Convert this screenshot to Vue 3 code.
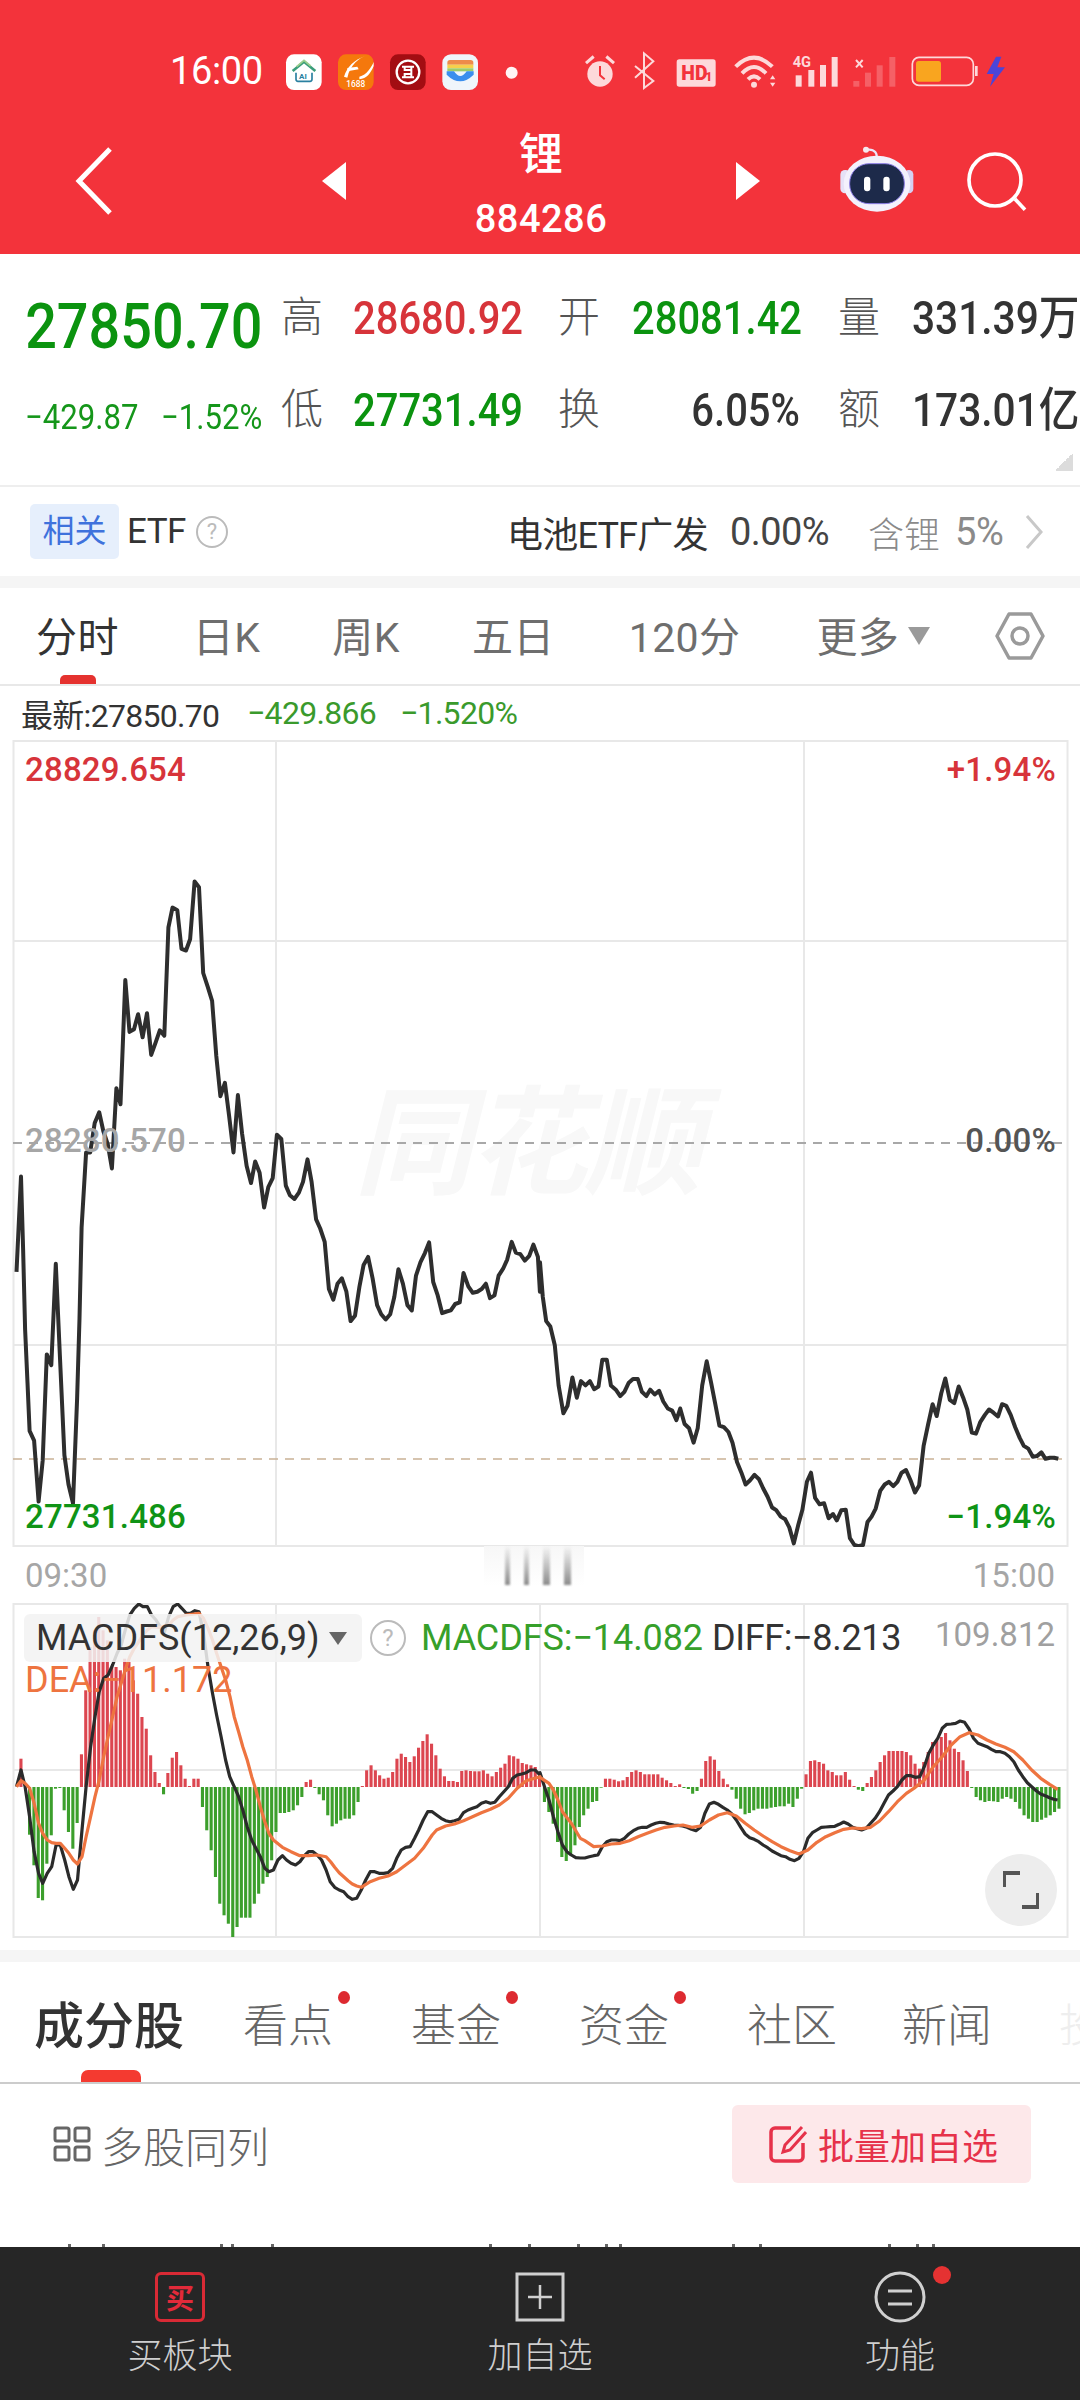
<script setup>
const flat = (a, fx, fy) => {
  const out = []
  for (let i = 0; i < a.length; i += 2) out.push(fx(a[i]).toFixed(1) + ',' + fy(a[i + 1]).toFixed(1))
  return out.join(' ')
}
const Lx = (x) => x / 2.904
const Rx = (x) => 540 + x / 2.904
const mainY = (y) => 740 + y / 1.867
const macdY = (y) => 1590 + y / 3

const mainL = [48,993,61,815,67,950,73,1100,80,1200,86,1290,99,1308,112,1422,124,1345,136,1147,149,1167,162,978,174,1150,187,1335,199,1390,212,1425,224,1230,231,1080,237,910,250,770,262,770,275,715,288,695,300,730,313,755,325,800,338,650,350,680,364,448,376,545,389,540,401,512,414,555,427,510,439,588,452,565,464,542,477,552,489,350,501,313,515,318,527,390,540,393,552,372,565,264,578,275,590,435,603,460,616,487,628,590,640,665,653,640,665,700,678,770,691,663,703,735,716,795,729,827,741,787,754,808,767,873,779,835,792,818,804,737,817,745,830,832,842,850,855,857,868,845,880,825,893,783,905,825,918,895,930,912,943,937,955,1025,968,1045,980,1015,993,1005,1006,1030,1018,1085,1031,1075,1044,1020,1056,980,1069,965,1082,1005,1095,1055,1107,1072,1120,1082,1133,1072,1145,1040,1157,988,1170,1015,1183,1055,1196,1065,1208,1000,1221,975,1234,958,1246,938,1258,1012,1271,1037,1284,1070,1297,1067,1309,1065,1322,1053,1335,1050,1346,995,1360,1020,1373,1032,1386,1030,1399,1025,1411,1015,1423,1042,1436,1037,1448,1000,1461,987,1473,970,1486,937,1498,957,1511,960,1524,972,1537,963,1549,942,1562,965,1568,1030]
const mainR = [0,975,8,1040,18,1085,30,1095,43,1130,54,1205,68,1257,80,1243,94,1190,107,1228,119,1197,132,1205,145,1197,157,1212,170,1207,181,1157,194,1157,206,1205,220,1213,233,1225,245,1217,258,1200,270,1193,284,1193,296,1217,309,1225,320,1213,333,1222,346,1215,358,1235,371,1248,384,1252,396,1270,407,1248,420,1277,433,1285,446,1312,458,1285,471,1205,484,1160,497,1200,509,1240,521,1280,534,1283,547,1292,559,1312,572,1348,585,1368,597,1390,610,1382,623,1372,636,1380,648,1397,661,1413,674,1433,686,1438,699,1450,712,1455,724,1470,737,1500,750,1465,762,1437,775,1385,787,1368,799,1415,812,1427,825,1425,838,1453,851,1445,862,1457,875,1438,888,1437,900,1490,913,1503,925,1505,938,1503,951,1460,963,1450,975,1435,988,1402,1001,1390,1013,1385,1026,1393,1038,1385,1050,1368,1063,1363,1076,1382,1089,1405,1101,1392,1114,1318,1127,1278,1140,1240,1152,1262,1165,1220,1177,1192,1190,1232,1203,1238,1216,1207,1229,1228,1241,1250,1254,1293,1266,1295,1279,1273,1292,1260,1304,1250,1317,1256,1330,1263,1342,1240,1354,1243,1367,1260,1380,1283,1393,1303,1405,1318,1418,1323,1431,1338,1443,1337,1456,1330,1468,1342,1481,1340,1493,1340,1505,1342]
const mainLine = flat(mainL, Lx, mainY) + ' ' + flat(mainR, Rx, mainY)

const blackL = [48,590,61,540,73,590,86,680,99,785,112,850,124,880,137,850,150,830,163,765,175,765,188,810,200,860,213,898,225,870,238,720,250,590,263,470,276,380,288,305,301,265,314,255,327,225,340,190,352,165,365,115,377,75,390,55,403,42,415,50,428,50,440,75,453,90,465,110,478,125,490,80,503,50,516,42,528,55,541,70,553,70,566,62,578,65,591,130,604,230,617,310,629,375,642,440,655,510,667,560,680,590,693,620,705,660,718,710,731,750,743,775,756,800,769,835,781,845,794,840,807,810,820,797,832,810,845,820,858,825,871,815,883,798,896,785,909,785,921,795,934,810,947,840,959,875,972,892,985,900,998,905,1011,920,1023,928,1036,925,1049,900,1062,870,1075,845,1088,845,1101,850,1114,850,1127,848,1140,835,1152,805,1165,780,1178,772,1191,770,1204,745,1216,720,1229,690,1242,665,1255,665,1268,675,1281,685,1294,692,1307,695,1320,692,1333,688,1346,668,1359,660,1372,655,1385,650,1398,640,1411,635,1424,640,1437,637,1450,620,1463,605,1476,590,1489,565,1502,555,1515,552,1528,548,1541,540,1554,540,1568,555]
const blackR = [0,548,13,590,26,630,39,680,52,725,65,765,78,785,91,795,104,803,117,804,130,804,143,800,156,797,168,795,181,770,194,755,207,750,220,750,233,752,245,745,258,732,271,722,284,715,297,712,310,712,323,705,336,700,349,697,362,698,375,702,388,705,401,706,414,708,427,712,440,718,453,722,466,712,479,670,492,642,505,637,518,643,531,652,544,660,557,672,570,690,583,712,596,732,609,743,622,748,635,755,648,765,661,773,674,783,687,790,700,797,713,800,726,808,739,812,752,805,765,785,778,745,791,728,804,720,817,712,830,711,843,710,856,709,869,703,882,696,895,702,908,712,921,716,934,720,947,715,960,700,973,685,986,665,999,640,1012,615,1025,603,1038,590,1051,570,1064,557,1077,557,1090,562,1103,560,1116,530,1129,490,1142,465,1155,445,1168,415,1181,403,1194,402,1207,400,1220,393,1233,397,1246,417,1259,445,1272,460,1285,465,1298,470,1311,478,1324,485,1337,485,1350,490,1363,500,1376,515,1389,540,1402,560,1415,578,1428,590,1441,602,1454,612,1467,617,1480,623,1492,628,1503,630]
const orangeL = [48,590,61,572,73,580,86,595,99,640,112,700,124,730,137,750,150,758,163,760,175,760,188,775,200,790,213,810,225,822,238,800,250,740,263,680,276,620,288,570,301,500,314,440,327,380,340,320,352,280,365,235,377,200,390,175,403,155,415,135,428,120,440,110,465,112,490,105,503,90,516,80,541,75,578,70,591,85,604,115,617,150,629,190,642,230,655,270,668,320,680,380,693,425,705,470,718,510,731,560,743,600,756,650,769,695,781,730,794,750,820,772,845,785,871,797,896,797,921,795,947,800,960,815,972,832,985,848,998,860,1011,872,1023,882,1036,888,1049,892,1075,875,1101,865,1127,858,1152,845,1178,825,1204,805,1229,775,1255,735,1268,720,1294,708,1320,702,1346,692,1372,680,1398,668,1424,658,1450,645,1476,625,1502,595,1528,572,1568,560]
const orangeR = [0,562,26,580,39,600,52,630,65,665,91,700,117,745,130,752,156,770,181,768,207,762,233,760,259,752,285,740,311,730,337,720,363,712,389,708,415,705,441,712,466,708,492,690,518,675,544,668,570,678,596,700,622,720,648,738,674,755,700,770,726,782,752,792,778,780,804,757,830,740,856,728,882,718,908,714,934,716,960,712,986,693,1012,665,1038,635,1064,610,1090,592,1116,570,1142,530,1168,500,1194,465,1220,440,1246,428,1272,435,1298,450,1324,462,1350,472,1376,485,1402,510,1428,540,1454,565,1480,583,1503,598]
const blackLine = flat(blackL, Lx, macdY) + ' ' + flat(blackR, Rx, macdY)
const orangeLine = flat(orangeL, Lx, macdY) + ' ' + flat(orangeR, Rx, macdY)

const barsL = [85,0,-143,-235,-333,-340,-230,-145,-5,-3,-70,-135,-185,-108,98,290,420,470,510,470,440,360,360,350,385,375,320,280,210,175,95,45,12,-22,42,88,105,65,25,3,25,25,-60,-130,-190,-270,-350,-385,-410,-450,-420,-392,-392,-392,-350,-320,-290,-270,-220,-135,-78,-78,-75,-70,-55,-30,15,22,-3,-22,-40,-85,-118,-110,-100,-95,-95,-85,-45,3,50,65,50,35,25,28,45,85,100,90,75,92,118,138,158,130,95,55,32,18,18,15,48,50,48,47,47,50,40,32,45,58,70,95,92,85,72,68,65,60,40]
const barsR = [-45,-75,-110,-165,-210,-222,-205,-175,-120,-85,-65,-45,-42,-2,25,25,22,17,20,30,45,50,45,38,38,38,38,28,20,12,3,8,-3,-6,-20,-12,25,78,92,82,48,25,8,-8,-35,-65,-82,-78,-70,-65,-65,-65,-62,-60,-58,-58,-50,-60,-35,-5,38,78,80,75,70,50,45,35,35,45,22,3,-8,-12,12,30,50,75,95,108,108,108,108,105,95,70,55,75,105,135,140,150,162,140,115,105,80,48,-3,-30,-40,-45,-42,-43,-45,-35,-30,-35,-45,-65,-85,-95,-105,-105,-98,-92,-85,-75,-65]
const makeBars = (arr, x0, x1) => arr.map((h, i) => {
  const x = x0 + (i * (x1 - x0)) / (arr.length - 1)
  const hh = Math.abs(h) / 3
  return { x: (x - 1.6).toFixed(1), y: (h > 0 ? 1787 - hh : 1787).toFixed(1), h: hh.toFixed(1), up: h > 0 }
})
const bars = [...makeBars(barsL, 21, 539.6), ...makeBars(barsR, 544.5, 1059)]
const ticks = [68, 102, 220, 231, 271, 489, 528, 577, 605, 619, 732, 759, 888, 916, 932]

const tabs = ['分时', '日K', '周K', '五日', '120分']
const subTabs = [
  { t: '看点', dot: true }, { t: '基金', dot: true }, { t: '资金', dot: true },
  { t: '社区', dot: false }, { t: '新闻', dot: false }
]
</script>

<template>
  <div class="page">
    <header class="head">
      <div class="status">
        <span class="time">16:00</span>
        <svg class="apps" width="270" height="50" viewBox="0 0 810 150">
          <rect x="48" y="25" width="107" height="107" rx="24" fill="#fff" />
          <path d="M68 75 L102 47 L136 75" fill="none" stroke="#3a9d7a" stroke-width="8" />
          <path d="M80 62 L102 43 L122 60" fill="none" stroke="#9ccf8e" stroke-width="5" />
          <path d="M78 80 V100 a6 6 0 0 0 6 6 H120 a6 6 0 0 0 6 -6 V80" fill="none" stroke="#2a80a0" stroke-width="5" />
          <text x="87" y="100" font-size="24" font-weight="700" fill="#2a80a0" class="svgt">AI</text>
          <rect x="204" y="25" width="107" height="107" rx="24" fill="#f5780c" />
          <path d="M222 92 C232 62 252 42 285 30 C270 36 240 55 232 95 Z" fill="#fff" />
          <path d="M232 66 L262 62 L266 70 L232 76 Z M268 92 C290 88 305 62 311 48 L311 60 C302 82 290 98 268 100 Z" fill="#fff" />
          <text x="229" y="122" font-size="25" font-weight="500" fill="#fff" class="svgt">1688</text>
          <rect x="360" y="25" width="107" height="107" rx="24" fill="#a30d12" />
          <circle cx="414" cy="78" r="34" fill="none" stroke="#fff" stroke-width="7" />
          <path d="M396 62 H432 M396 94 H432 M404 62 V72 H424 V84 H404 V94 M424 62 V72 M424 84 V94" fill="none" stroke="#fff" stroke-width="6" />
          <rect x="517" y="25" width="107" height="107" rx="26" fill="#eff5fb" />
          <path d="M532 56 V50 a8 8 0 0 1 8 -8 H602 a8 8 0 0 1 8 8 V56 Z" fill="#ee8a4a" />
          <rect x="532" y="56" width="78" height="11" fill="#f6cf4c" />
          <rect x="532" y="67" width="78" height="9" fill="#9ccc6a" />
          <path d="M530 76 H552 Q571 104 590 76 H611 V86 Q590 106 571 106 Q550 106 530 86 Z" fill="#3a8eee" />
          <circle cx="725" cy="80" r="18" fill="#fff5f5" />
        </svg>
        <svg class="sys" width="450" height="50" viewBox="0 0 1350 150">
          <g fill="#fdd9da" stroke="none">
            <circle cx="90" cy="84" r="38" />
            <path d="M45 48 L68 28 L74 35 L51 55 Z M112 28 L135 48 L129 55 L106 35 Z" />
            <rect x="320" y="40" width="117" height="82" rx="8" />
            <circle cx="552" cy="116" r="9" />
            <path d="M600 100 L608 88 L616 100 Z M600 110 L616 110 L608 122 Z" />
            <rect x="677" y="88" width="18" height="34" /><rect x="715" y="72" width="18" height="50" />
            <rect x="750" y="57" width="18" height="65" /><rect x="785" y="33" width="18" height="89" />
            <rect x="1215" y="60" width="8" height="30" />
          </g>
          <path d="M90 60 V88 L104 100" fill="none" stroke="#f3333b" stroke-width="6" />
          <path d="M195 60 L250 105 L222 126 V22 L250 46 L195 95" fill="none" stroke="#fdd9da" stroke-width="6" />
          <text x="334" y="102" font-size="58" font-weight="900" fill="#f3333b" class="svgt">HD</text>
          <text x="406" y="106" font-size="36" font-weight="900" fill="#f3333b" class="svgt">1</text>
          <g fill="none" stroke="#fdd9da" stroke-width="12">
            <path d="M497 62 Q552 8 607 62" /><path d="M516 82 Q552 44 588 82" /><path d="M534 100 Q552 82 570 100" />
          </g>
          <text x="668" y="64" font-size="44" font-weight="700" fill="#fdd9da" class="svgt">4G</text>
          <path d="M858 42 L878 64 M878 42 L858 64" stroke="#fdd9da" stroke-width="6" />
          <g fill="#fff" opacity=".22">
            <rect x="850" y="105" width="18" height="17" /><rect x="885" y="80" width="18" height="42" />
            <rect x="920" y="58" width="18" height="64" /><rect x="958" y="33" width="18" height="89" />
          </g>
          <rect x="1027" y="34" width="183" height="84" rx="20" fill="none" stroke="#fdd9da" stroke-width="5" />
          <rect x="1038" y="45" width="75" height="62" rx="8" fill="#f9a51f" />
          <path d="M1278 32 L1250 84 H1271 L1260 122 L1305 64 H1282 L1294 32 Z" fill="#4a45d8" />
        </svg>
      </div>
      <div class="nav">
        <svg class="up" width="38" height="68" viewBox="0 0 38 68"><path d="M35 2 L4 34 L35 66" fill="none" stroke="#fff" stroke-width="5" /></svg>
        <svg class="tri-l up" width="24" height="38" viewBox="0 0 24 38"><path d="M24 0 V38 L0 19 Z" fill="#fff" /></svg>
        <div class="title">
          <span class="name">锂</span>
          <span class="code">884286</span>
        </div>
        <svg class="up" width="24" height="38" viewBox="0 0 24 38"><path d="M0 0 V38 L24 19 Z" fill="#fff" /></svg>
        <svg class="tools" width="220" height="90" viewBox="0 0 660 270">
          <path d="M165 75 C172 55 160 42 140 44" fill="none" stroke="#ece6fb" stroke-width="7" />
          <circle cx="135" cy="44" r="9" fill="#f6e9ee" />
          <rect x="58" y="105" width="30" height="70" rx="14" fill="#e6e2f7" />
          <rect x="250" y="105" width="27" height="70" rx="13" fill="#d5d0f2" />
          <ellipse cx="168" cy="146" rx="100" ry="84" fill="#f3f1fc" />
          <rect x="86" y="86" width="164" height="120" rx="58" fill="#1d2a4a" stroke="#8c7ee6" stroke-width="3" />
          <rect x="129" y="125" width="19" height="44" rx="9" fill="#fff" />
          <rect x="187" y="125" width="19" height="44" rx="9" fill="#fff" />
          <circle cx="522" cy="135" r="78" fill="none" stroke="#fff" stroke-width="11" />
          <path d="M582 192 L612 224" stroke="#fff" stroke-width="11" />
        </svg>
      </div>
    </header>

    <section class="quote">
      <div class="price">27850.70</div>
      <span class="lb">高</span><span class="val red">28680.92</span>
      <span class="lb">开</span><span class="val green">28081.42</span>
      <span class="lb">量</span><span class="val dark end">331.39万</span>
      <div class="chg"><span>−429.87</span><span>−1.52%</span></div>
      <span class="lb">低</span><span class="val green">27731.49</span>
      <span class="lb">换</span><span class="val dark rate">6.05%</span>
      <span class="lb">额</span><span class="val dark end">173.01亿</span>
      <i class="corner"></i>
    </section>

    <section class="etf">
      <span class="chip">相关</span>
      <span class="etf-t">ETF</span>
      <span class="q">?</span>
      <span class="etf-name">电池ETF广发</span>
      <span class="etf-num">0.00%</span>
      <span class="etf-has">含锂</span>
      <span class="etf-pct">5%</span>
      <svg class="chev" width="18" height="34" viewBox="0 0 18 34"><path d="M2 1 L16 17 L2 33" fill="none" stroke="#c8c8c8" stroke-width="3" /></svg>
    </section>
    <div class="band"></div>

    <nav class="tabs">
      <span v-for="(t, i) in tabs" :key="t" class="tab" :class="{ on: i === 0 }">{{ t }}</span>
      <span class="tab more">更多</span>
      <i class="more-tri"></i>
      <svg class="hex" width="50" height="48" viewBox="0 0 50 48">
        <path d="M14 2 H36 L48 24 L36 46 H14 L2 24 Z" fill="none" stroke="#9a9a9a" stroke-width="3.5" stroke-linejoin="round" />
        <circle cx="25" cy="24" r="8" fill="none" stroke="#9a9a9a" stroke-width="3.5" />
      </svg>
    </nav>

    <div class="info">
      <span class="info-a">最新:27850.70</span>
      <span class="info-b">−429.866</span>
      <span class="info-b">−1.520%</span>
    </div>

    <section class="chart">
      <div class="watermark">同花顺</div>
      <svg class="plot" width="1080" height="807" viewBox="0 740 1080 807">
        <g stroke="#e8e8e8" stroke-width="2" fill="none">
          <rect x="13.5" y="741" width="1054" height="805" />
          <path d="M13 941 H1067 M13 1345 H1067 M276 740 V1546 M804 740 V1546" />
        </g>
        <path d="M13 1143 H1062" stroke="#a8a8a8" stroke-width="2" stroke-dasharray="9 7" />
        <path d="M13 1459 H1062" stroke="#c9b195" stroke-width="1.5" stroke-dasharray="9 7" />
        <polyline :points="mainLine" fill="none" stroke="#2e2e2e" stroke-width="4" stroke-linejoin="round" />
      </svg>
      <span class="pl tl red">28829.654</span>
      <span class="pl ml gray">28280.570</span>
      <span class="pl bl cgreen">27731.486</span>
      <span class="pl tr red">+1.94%</span>
      <span class="pl mr dim">0.00%</span>
      <span class="pl br cgreen">−1.94%</span>
      <div class="grip"><i></i><i></i><i class="w"></i><i class="w"></i></div>
    </section>

    <div class="axis"><span>09:30</span><span>15:00</span></div>

    <section class="macd">
      <svg class="plot" width="1080" height="335" viewBox="0 1603 1080 335">
        <g stroke="#e8e8e8" stroke-width="2" fill="none">
          <rect x="13.5" y="1604" width="1054" height="333" />
          <path d="M13 1770 H1067 M276 1603 V1937 M540 1603 V1937 M804 1603 V1937" />
        </g>
        <rect v-for="(b, i) in bars" :key="i" :x="b.x" :y="b.y" width="3.1" :height="b.h" :fill="b.up ? '#dc4650' : '#3c9f2c'" />
        <polyline :points="blackLine" fill="none" stroke="#2b2b2b" stroke-width="3.2" stroke-linejoin="round" />
        <polyline :points="orangeLine" fill="none" stroke="#ee7440" stroke-width="3.2" stroke-linejoin="round" />
      </svg>
      <div class="legend">
        <span class="sel">MACDFS(12,26,9)<i class="sel-tri"></i></span>
        <span class="q big">?</span>
        <span class="m-g">MACDFS:−14.082</span>
        <span class="m-d">DIFF:−8.213</span>
      </div>
      <span class="max">109.812</span>
      <span class="dea">DEA:−11.172</span>
      <button class="expand" type="button">
        <svg width="36" height="38" viewBox="0 0 36 38"><path d="M1 16 V2 H17 M35 22 V36 H19" fill="none" stroke="#555" stroke-width="4" /></svg>
      </button>
    </section>

    <div class="gap"></div>
    <div class="band"></div>

    <nav class="subtabs">
      <span class="lead">成分股</span>
      <span v-for="s in subTabs" :key="s.t" class="st">{{ s.t }}<i v-if="s.dot" class="st-dot"></i></span>
      <span class="st fade">投资</span>
    </nav>

    <main class="content">
      <div class="tools-row">
        <svg width="38" height="36" viewBox="0 0 38 36">
          <g fill="none" stroke="#666" stroke-width="3">
            <rect x="2" y="2" width="14" height="13" rx="2" /><rect x="22" y="2" width="14" height="13" rx="2" />
            <rect x="2" y="21" width="14" height="13" rx="2" /><rect x="22" y="21" width="14" height="13" rx="2" />
          </g>
        </svg>
        <span class="multi">多股同列</span>
        <button class="batch" type="button">
          <svg width="38" height="38" viewBox="0 0 38 38">
            <path d="M22 3 H6 a4 4 0 0 0 -4 4 V32 a4 4 0 0 0 4 4 H30 a4 4 0 0 0 4 -4 V18" fill="none" stroke="#e6324a" stroke-width="3.5" />
            <path d="M33 2 L16 20 L14 27 L21 25 L37 7" fill="none" stroke="#e6324a" stroke-width="3" />
          </svg>
          <span>批量加自选</span>
        </button>
      </div>
      <svg class="peek" width="1080" height="3" viewBox="0 0 1080 3">
        <rect v-for="x in ticks" :key="x" :x="x" y="0" width="3" height="3" fill="#666" />
      </svg>
    </main>

    <footer class="foot">
      <div class="foot-i">
        <span class="buy"><b>买</b></span>
        <span class="foot-t">买板块</span>
      </div>
      <div class="foot-i">
        <svg width="50" height="50" viewBox="0 0 50 50">
          <rect x="2" y="2" width="46" height="46" fill="none" stroke="#d0d0d0" stroke-width="3" />
          <path d="M25 13 V37 M13 25 H37" stroke="#d0d0d0" stroke-width="2.5" />
        </svg>
        <span class="foot-t">加自选</span>
      </div>
      <div class="foot-i">
        <span class="fn">
          <svg width="52" height="52" viewBox="0 0 52 52">
            <circle cx="26" cy="26" r="24" fill="none" stroke="#d0d0d0" stroke-width="3" />
            <path d="M14 20 H38 M14 33 H38" stroke="#d0d0d0" stroke-width="3" />
          </svg>
          <i class="fn-dot"></i>
        </span>
        <span class="foot-t">功能</span>
      </div>
    </footer>
  </div>
</template>

<style scoped>
.page {
  width: 1080px; height: 2400px; overflow: hidden; background: #fff;
  display: flex; flex-direction: column;
  font-family: Roboto, "Noto Sans CJK SC", sans-serif; color: #333;
}
.svgt { font-family: Roboto, "Noto Sans CJK SC", sans-serif; }
.head { height: 254px; background: #f3333b; color: #fff; flex: none; }
.status { display: flex; align-items: center; height: 50px; padding: 46px 0 0 170px; }
.time { width: 100px; font-size: 38px; letter-spacing: -.4px; color: #fff; }
.sys { margin-left: 30px; }
.nav { display: flex; align-items: center; height: 112px; margin-top: 34px; padding-left: 75px; }
.up { margin-bottom: 10px; }
.tri-l { margin-left: 209px; }
.title { width: 390px; height: 112px; display: flex; flex-direction: column; align-items: center; }
.name { font-size: 44px; line-height: 50px; font-weight: 500; }
.code { font-size: 38px; line-height: 38px; margin-top: 20px; font-weight: 500; letter-spacing: .5px; }
.tools { margin-left: 61px; margin-bottom: 12px; }

.quote {
  position: relative; flex: none; border-bottom: 2px solid #eee; height: 213px; padding-top: 18px;
  display: grid; grid-template-columns: 281px 72px 205px 74px 206px 74px 168px;
  grid-template-rows: 92px 92px; align-content: start; align-items: center;
}
.price {
  font-size: 63px; font-weight: 500; color: #0b930f; padding-left: 25px; line-height: 60px; margin-top: 18px;
  transform: scaleX(.885); transform-origin: 0 50%; white-space: nowrap; margin-left: 3px;
}
.chg { display: flex; padding-left: 25px; font-size: 35px; color: #15961a; margin-top: 14px; white-space: nowrap; }
.chg span { width: 136px; flex: none; transform: scaleX(.89); transform-origin: 0 50%; }
.lb { font-size: 42px; font-weight: 300; color: #555; line-height: 50px; }
.val {
  font-size: 47px; font-weight: 500; line-height: 56px; white-space: nowrap;
  transform: scaleX(.85); transform-origin: 0 50%;
}
.red { color: #d7343a; }
.green { color: #0b930f; }
.dark { color: #333; }
.val.end { transform: scaleX(.865); }
.val.rate { text-align: right; margin-right: 38px; transform-origin: 100% 50%; }
.corner {
  position: absolute; right: 7px; top: 199px; width: 18px; height: 18px;
  background: linear-gradient(135deg, transparent 50%, #dcdcdc 50%);
}

.etf { flex: none; height: 89px; display: flex; align-items: center; padding-left: 30px; font-size: 34px; }
.chip { width: 89px; height: 55px; background: #e6effc; color: #3f72dc; border-radius: 5px; text-align: center; line-height: 55px; font-size: 32px; }
.etf-t { margin-left: 8px; width: 61px; font-size: 35px; letter-spacing: -.5px; }
.q {
  width: 28px; height: 28px; margin-left: 8px; border: 2px solid #bbb; border-radius: 50%;
  font-size: 22px; line-height: 28px; color: #bbb; text-align: center; flex: none;
}
.etf-name { margin-left: 279px; width: 223px; font-size: 36px; letter-spacing: -.8px; white-space: nowrap; color: #333; }
.etf-num { font-size: 38px; letter-spacing: -.6px; width: 138px; color: #444; }
.etf-has { font-size: 36px; color: #8a8a8a; width: 87px; font-weight: 300; }
.etf-pct { font-size: 38px; color: #8a8a8a; width: 70px; letter-spacing: -.3px; }
.band { flex: none; height: 12px; background: #f5f5f5; }

.tabs { flex: none; position: relative; height: 96px; border-bottom: 2px solid #e8e8e8; display: flex; align-items: center; padding-left: 36px; }
.tab { font-size: 41px; color: #6e6e6e; line-height: 50px; white-space: nowrap; letter-spacing: .4px; padding-top: 3px; }
.tab:nth-child(2) { margin-left: 74px; }
.tab:nth-child(3) { margin-left: 72px; }
.tab:nth-child(4) { margin-left: 72px; }
.tab:nth-child(5) { margin-left: 74px; }
.tab.more { margin-left: 76px; }
.tab.on { color: #333; }
.tab.on::after {
  content: ""; position: absolute; left: 60px; bottom: 0; width: 36px; height: 9px;
  border-radius: 5px 5px 0 0; background: #e5322f;
}
.more-tri { margin-left: 9px; width: 0; height: 0; border-left: 11px solid transparent; border-right: 11px solid transparent; border-top: 18px solid #9a9a9a; }
.hex { margin-left: 65px; }

.info { flex: none; height: 54px; display: flex; align-items: center; padding-left: 21px; font-size: 32px; letter-spacing: -.7px; }
.info-a { width: 226px; color: #333; white-space: nowrap; }
.info-b { width: 153px; color: #3a9a2c; }

.chart { flex: none; position: relative; height: 807px; }
.plot { position: absolute; left: 0; top: 0; }
.watermark {
  position: absolute; left: 354px; top: 340px; width: 370px; font-size: 118px; line-height: 130px; font-weight: 700;
  color: #f8f8f8; font-style: italic; letter-spacing: -3px; white-space: nowrap;
}
.pl { position: absolute; font-size: 33px; line-height: 40px; font-weight: 500; letter-spacing: .2px; }
.tl { left: 25px; top: 10px; }
.ml { left: 25px; top: 381px; }
.bl { left: 25px; top: 757px; }
.tr { right: 24px; top: 10px; }
.mr { right: 24px; top: 381px; }
.br { right: 24px; top: 757px; }
.gray { color: #a6a6a6; }
.dim { color: #555; }
.cgreen { color: #0f9416; }
.grip {
  position: absolute; left: 484px; top: 806px; width: 100px; height: 40px; display: flex; justify-content: center; gap: 14px;
  padding-left: 8px; box-sizing: border-box;
  background: linear-gradient(to bottom, #f7f7f7, rgba(255,255,255,0));
}
.grip i { width: 5px; height: 39px; filter: blur(1px); background: linear-gradient(to bottom, rgba(110,110,110,0), rgba(110,110,110,.8)); }
.grip i.w { width: 7px; }

.axis { flex: none; height: 56px; display: flex; justify-content: space-between; align-items: center; padding: 0 25px; color: #a6a6a6; font-size: 33px; }

.macd { flex: none; position: relative; height: 335px; }
.legend { position: absolute; left: 24px; top: 11px; height: 48px; display: flex; align-items: center; white-space: nowrap; }
.sel {
  height: 48px; width: 338px; box-sizing: border-box; padding-left: 12px; border-radius: 6px; position: relative;
  background: rgba(242,242,242,.86); color: #333; font-size: 36px; line-height: 48px; letter-spacing: 0;
}
.sel-tri { position: absolute; right: 15px; top: 18px; width: 0; height: 0; border-left: 9px solid transparent; border-right: 9px solid transparent; border-top: 13px solid #666; }
.q.big { width: 32px; height: 32px; line-height: 32px; font-size: 24px; margin-left: 8px; }
.m-g { margin-left: 15px; color: #36a02a; font-size: 36px; letter-spacing: -.1px; }
.m-d { margin-left: 9px; color: #333; font-size: 36px; letter-spacing: -.35px; }
.max { position: absolute; right: 25px; top: 12px; color: #a0a0a0; font-size: 33px; line-height: 40px; }
.dea { position: absolute; left: 25px; top: 54px; color: #ee7440; font-size: 36px; line-height: 46px; }
.expand {
  position: absolute; left: 985px; top: 251px; width: 72px; height: 72px; border: 0; padding: 0; border-radius: 50%;
  background: #ededed; display: flex; align-items: center; justify-content: center;
}
.gap { flex: none; height: 12px; }

.subtabs { flex: none; height: 120px; border-bottom: 2px solid #ccc; display: flex; align-items: center; padding-left: 34px; position: relative; overflow: hidden; }
.lead { font-size: 50px; font-weight: 500; color: #333; width: 209px; flex: none; position: relative; white-space: nowrap; }
.lead::after { content: ""; position: absolute; left: 47px; top: 84px; width: 60px; height: 13px; border-radius: 7px 7px 0 0; background: #f43a30; }
.st { position: relative; font-size: 45px; font-weight: 300; color: #666; width: 168px; flex: none; white-space: nowrap; }
.st:nth-child(5) { width: 155px; }
.st:nth-child(6) { width: 157px; }
.st-dot { position: absolute; left: 95px; top: 1px; width: 12px; height: 13px; border-radius: 50%; background: #dd2a30; }
.st.fade { color: #eee; }

.content { flex: 1; min-height: 0; overflow: hidden; }
.tools-row { display: flex; align-items: center; height: 120px; padding-left: 53px; box-sizing: border-box; }
.multi { margin-left: 10px; font-size: 42px; font-weight: 300; color: #666; }
.batch {
  margin-left: 463px; width: 299px; height: 78px; border: 0; border-radius: 6px; background: #fde8ea;
  display: flex; align-items: center; padding: 0 0 0 37px; gap: 11px; color: #e6324a; font-size: 36px;
  font-family: Roboto, "Noto Sans CJK SC", sans-serif;
}
.peek { display: block; margin-top: 40px; }

.foot { flex: none; height: 153px; background: #262626; display: grid; grid-template-columns: repeat(3, 360px); }
.foot-i { display: flex; flex-direction: column; align-items: center; padding-top: 25px; }
.foot-i > svg { display: block; }
.foot-t { margin-top: 12px; font-size: 35px; line-height: 46px; color: #cfcfcf; font-weight: 300; }
.buy { width: 44px; height: 44px; border: 3px solid #d92a35; border-radius: 6px; display: flex; align-items: center; justify-content: center; }
.buy b { color: #e22a3a; font-size: 28px; font-weight: 700; }
.fn { position: relative; height: 50px; }
.fn svg { display: block; margin-top: -1px; }
.fn-dot { position: absolute; left: 59px; top: -6px; width: 18px; height: 18px; border-radius: 50%; background: #e53232; }
</style>

<style>
html, body { margin: 0; background: #fff; }
</style>
